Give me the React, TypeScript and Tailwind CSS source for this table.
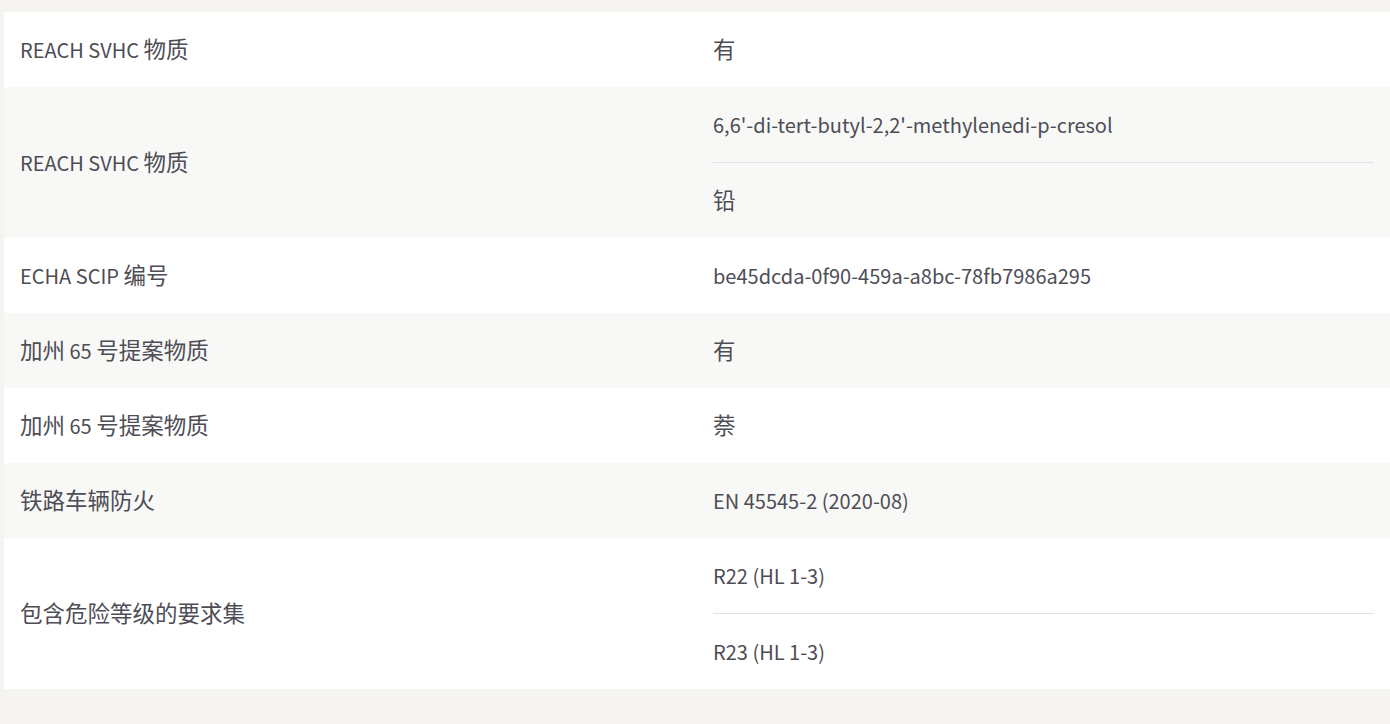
import React from "react";

type Row = { label: string; values: string[] };

const rows: Row[] = [
  { label: "REACH SVHC 物质", values: ["有"] },
  { label: "REACH SVHC 物质", values: ["6,6'-di-tert-butyl-2,2'-methylenedi-p-cresol", "铅"] },
  { label: "ECHA SCIP 编号", values: ["be45dcda-0f90-459a-a8bc-78fb7986a295"] },
  { label: "加州 65 号提案物质", values: ["有"] },
  { label: "加州 65 号提案物质", values: ["萘"] },
  { label: "铁路车辆防火", values: ["EN 45545-2 (2020-08)"] },
  { label: "包含危险等级的要求集", values: ["R22 (HL 1-3)", "R23 (HL 1-3)"] },
];

// CJK glyphs render a bit larger than the latin text in the original
function Text({ text }: { text: string }) {
  const parts = text.split(/([\u4e00-\u9fff]+)/).filter(Boolean);
  return (
    <span>
      {parts.map((p, i) =>
        /[\u4e00-\u9fff]/.test(p) ? (
          <span key={i} className="text-[22.5px] leading-none">
            {p}
          </span>
        ) : (
          <span key={i}>{p}</span>
        )
      )}
    </span>
  );
}

export default function App() {
  return (
    <div
      className="min-h-[724px] bg-[#f5f4f1] pt-3 pl-1 text-[#4d4d56]"
      style={{ fontFamily: '"Noto Sans CJK SC", "Noto Sans", sans-serif' }}
    >
      <div className="w-[1386px]">
        {rows.map((row, i) => (
          <div
            key={i}
            className={`grid grid-cols-2 ${i % 2 === 0 ? "bg-white" : "bg-[#f8f8f6]"}`}
          >
            <div className="flex items-center px-4 text-[20px] leading-[30px]">
              <Text text={row.label} />
            </div>
            <div className="px-4">
              {row.values.map((v, j) => (
                <div
                  key={j}
                  className={`flex items-center text-[20px] leading-[30px] ${
                    j > 0 ? "h-[76px] border-t border-[#e2e2e2]" : "h-[75px]"
                  }`}
                >
                  <Text text={v} />
                </div>
              ))}
            </div>
          </div>
        ))}
      </div>
    </div>
  );
}
